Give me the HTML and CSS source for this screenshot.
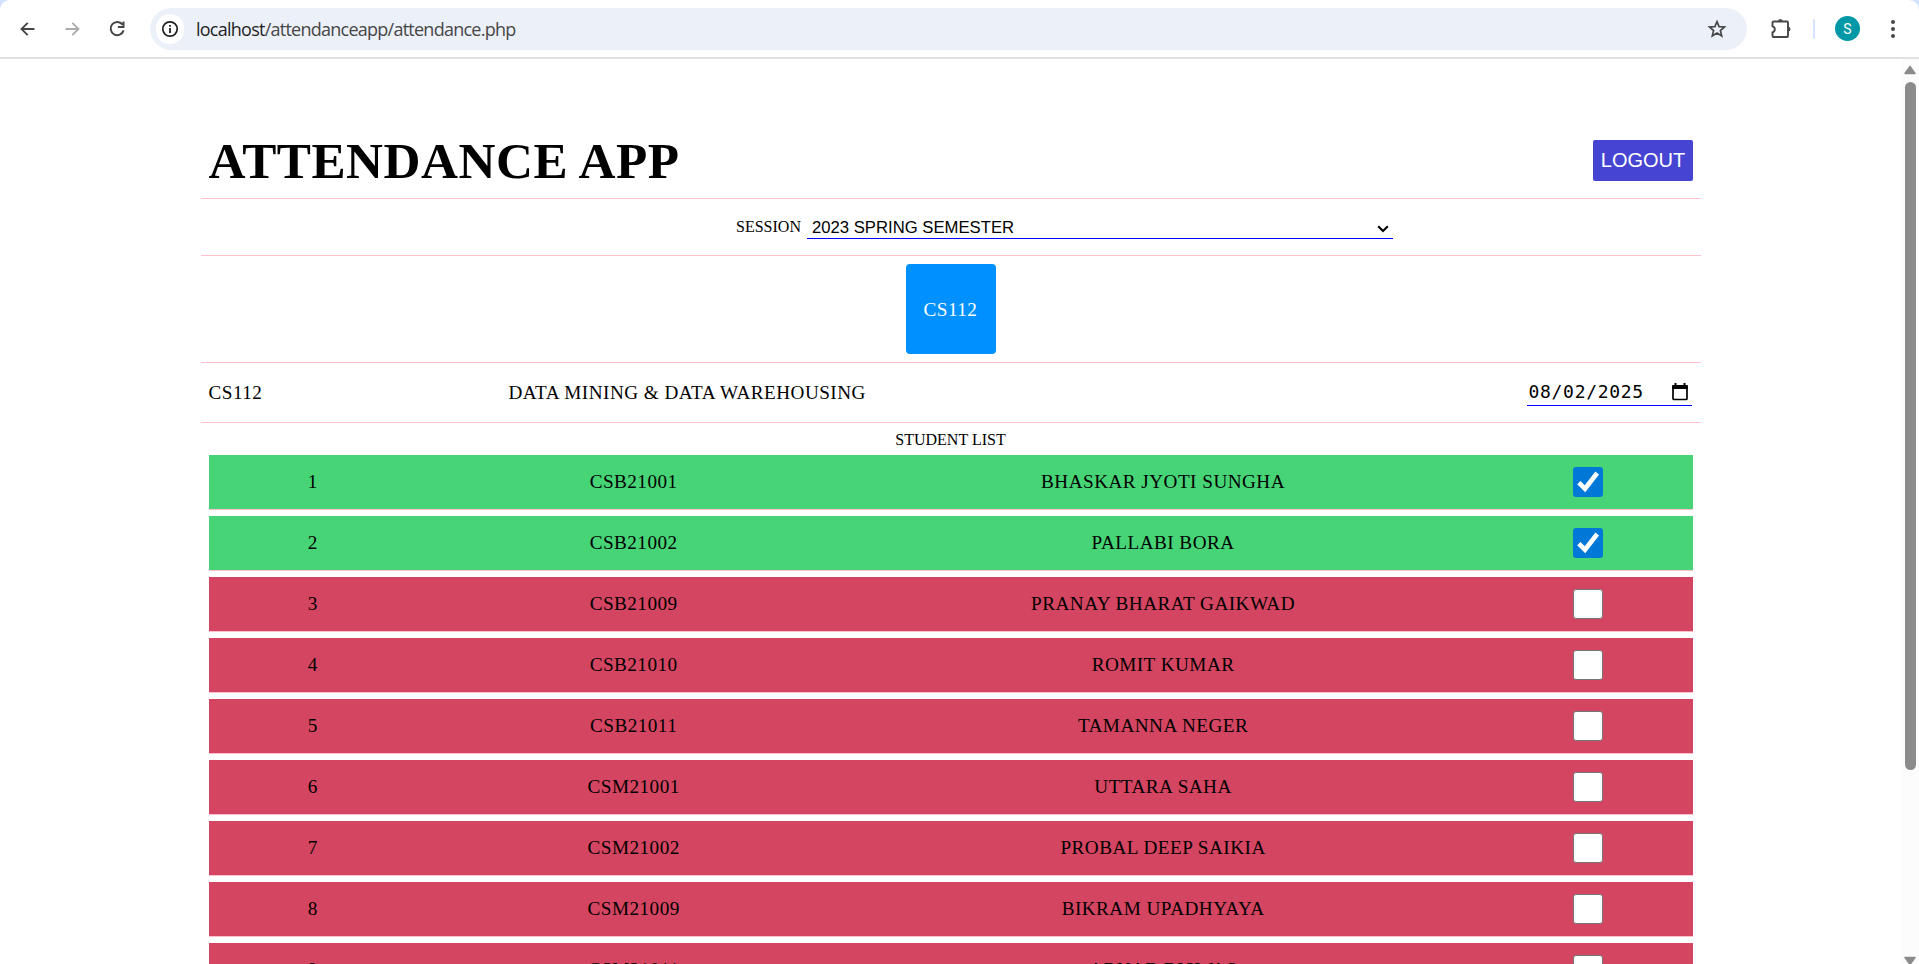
FILE: index.html
```html
<!DOCTYPE html>
<html lang="en">
<head>
<meta charset="utf-8">
<title>Attendance App</title>
<link rel="stylesheet" href="styles.css">
</head>
<body>
<div class="toolbar-wrap">
  <header class="toolbar">
    <svg class="icon back" width="20" height="20" viewBox="0 0 20 20"><path d="M16.500 10H4M9.700 3.800 3.500 10l6.200 6.200" fill="none" stroke="#474747" stroke-width="1.900"/></svg>
    <svg class="icon forward" width="20" height="20" viewBox="0 0 20 20"><path d="M3.500 10H16M10.300 3.800l6.200 6.200-6.200 6.200" fill="none" stroke="#ababab" stroke-width="1.800"/></svg>
    <svg class="icon reload" width="20" height="20" viewBox="0 0 20 20"><path d="M15.600 5.600A6.600 6.600 0 1 0 16.600 11.400M16.500 2.500v5.600h-5.600" fill="none" stroke="#474747" stroke-width="2"/></svg>
    <div class="address">
      <span class="info"><svg width="18" height="18" viewBox="0 0 18 18"><circle cx="9" cy="9" r="7.200" fill="none" stroke="#1f1f1f" stroke-width="1.700"/><path d="M9 8v5M9 5v1.800" stroke="#1f1f1f" stroke-width="1.800"/></svg></span>
      <span class="url"><b class="host">localhost</b>/attendanceapp/attendance.php</span>
      <svg class="star" width="20" height="20" viewBox="0 0 20 20"><path d="M10 2.600l2.100 5 5.400.4-4.100 3.600 1.300 5.300L10 14.100l-4.700 2.800 1.300-5.300L2.500 8l5.400-.4z" fill="none" stroke="#474747" stroke-width="1.700"/></svg>
    </div>
    <svg class="puzzle" width="22" height="22" viewBox="0 0 22 22"><path d="M2.500 4.500q0-1 1-1h13.500q1 0 1 1v13.500q0 1-1 1H3.500q-1 0-1-1V14.300a3.100 3.100 0 0 0 0-6z" fill="none" stroke="#474747" stroke-width="1.900"/><path d="M8 3.500a2.400 2.500 0 0 1 4.800 0zM18 8.800a2.500 2.400 0 0 1 0 4.800z" fill="#474747"/></svg>
    <span class="divider"></span>
    <span class="avatar">S</span>
    <svg class="dots" width="6" height="20" viewBox="0 0 6 20"><g fill="#474747"><circle cx="3" cy="3" r="2"/><circle cx="3" cy="10" r="2"/><circle cx="3" cy="17" r="2"/></g></svg>
  </header>
</div>
<div class="viewport">
  <main class="page">
    <section class="head"><h1>ATTENDANCE APP</h1><button class="logout">LOGOUT</button></section>
    <section class="session">
      <label>SESSION</label>
      <div class="select"><span>2023 SPRING SEMESTER</span><svg width="12" height="8" viewBox="0 0 12 8"><path d="M1.200 1.200 6 6l4.800-4.800" fill="none" stroke="#000" stroke-width="2.100"/></svg></div>
    </section>
    <section class="courses"><div class="card">CS112</div></section>
    <section class="detail">
      <span class="code">CS112</span><span class="name">DATA MINING &amp; DATA WAREHOUSING</span>
      <div class="date"><span>08/02/2025</span><svg width="18" height="20" viewBox="0 0 18 20"><rect x="2" y="4" width="14" height="13.500" rx="1" fill="none" stroke="#000" stroke-width="1.700"/><path d="M1.200 3h15.600v4H1.200zM3.500 1h2v3h-2zM12.500 1h2v3h-2z"/></svg></div>
    </section>
    <div class="list-title">STUDENT LIST</div>
    <div class="list">
      <div class="row present"><span>1</span><span>CSB21001</span><span>BHASKAR JYOTI SUNGHA</span><i class="box"><svg viewBox="0 0 30 30"><path d="M5.800 15.700l6.200 6L24.200 6" fill="none" stroke="#fff" stroke-width="4.600"/></svg></i></div>
      <div class="row present"><span>2</span><span>CSB21002</span><span>PALLABI BORA</span><i class="box"><svg viewBox="0 0 30 30"><path d="M5.800 15.700l6.200 6L24.200 6" fill="none" stroke="#fff" stroke-width="4.600"/></svg></i></div>
      <div class="row"><span>3</span><span>CSB21009</span><span>PRANAY BHARAT GAIKWAD</span><i class="box"></i></div>
      <div class="row"><span>4</span><span>CSB21010</span><span>ROMIT KUMAR</span><i class="box"></i></div>
      <div class="row"><span>5</span><span>CSB21011</span><span>TAMANNA NEGER</span><i class="box"></i></div>
      <div class="row"><span>6</span><span>CSM21001</span><span>UTTARA SAHA</span><i class="box"></i></div>
      <div class="row"><span>7</span><span>CSM21002</span><span>PROBAL DEEP SAIKIA</span><i class="box"></i></div>
      <div class="row"><span>8</span><span>CSM21009</span><span>BIKRAM UPADHYAYA</span><i class="box"></i></div>
      <div class="row"><span>9</span><span>CSM21011</span><span>ARNAB BISWAS</span><i class="box"></i></div>
    </div>
  </main>
  <aside class="scrollbar">
    <svg width="12" height="10" viewBox="0 0 12 10"><path d="M6 1.500 11 8.500H1z" fill="#8b8b8b" stroke="#8b8b8b" stroke-linejoin="round" stroke-width="1.500"/></svg>
    <span class="thumb"></span>
    <svg class="down" width="12" height="10" viewBox="0 0 12 10"><path d="M6 8.500 11 1.500H1z" fill="#8b8b8b" stroke="#8b8b8b" stroke-linejoin="round" stroke-width="1.500"/></svg>
  </aside>
</div>
</body>
</html>
```

FILE: styles.css
```css
* { box-sizing: border-box; }
body {
  margin: 0;
  height: 964px;
  overflow: hidden;
  display: flex;
  flex-direction: column;
  background: #fff;
  color: #000;
  font-family: "Liberation Serif", "Times New Roman", serif;
  font-size: 16px;
}
.toolbar-wrap { flex: none; background: #d3e3fd; }
.toolbar {
  display: flex;
  align-items: center;
  height: 59px;
  padding: 0 23px 0 18px;
  background: #fff;
  border-bottom: 2px solid #e0e2e0;
  border-radius: 10px 10px 0 0;
}
.toolbar svg { flex: none; }
.forward { margin-left: 24px; }
.reload { margin-left: 25px; }
.address {
  display: flex;
  align-items: center;
  width: 1597px;
  height: 42px;
  margin-left: 23px;
  padding: 0 20px 0 6px;
  border-radius: 21px;
  background: #ecf0f9;
}
.info {
  display: grid;
  place-items: center;
  width: 28px;
  height: 30px;
  border-radius: 15px;
  background: #fff;
}
.url {
  margin-left: 12px;
  font: 18px "Open Sans", "Noto Sans", sans-serif;
  letter-spacing: -0.75px;
  color: #474747;
}
.host { font-weight: 400; color: #1f1f1f; }
.star { margin-left: auto; }
.puzzle { margin-left: 23px; }
.divider { width: 2px; height: 20px; margin-left: 21px; border-radius: 1px; background: #d3e3fd; }
.avatar {
  display: grid;
  place-items: center;
  width: 25px;
  height: 25px;
  margin: 0 30px 0 20px;
  border-radius: 50%;
  background: #0097a7;
  color: #fff;
  font: 14px Roboto, sans-serif;
}
.viewport { flex: 1; min-height: 0; display: flex; }
.page { width: 1500px; margin: 0 auto; }
.head, .session, .courses, .detail { border-bottom: 1px solid pink; padding: 0 8px; display: flex; }
.head { height: 140px; padding-top: 64px; justify-content: space-between; align-items: center; }
h1 { margin: 0; font-size: 51.2px; line-height: 60px; letter-spacing: 0.5px; }
.logout {
  width: 100px;
  height: 41px;
  margin-bottom: 13px;
  margin-top: 12px;
  padding: 0 0 0 1px;
  border: 0;
  border-radius: 2px;
  background: #4544d3;
  color: #fff;
  font: 20px "Liberation Sans", Arial, sans-serif;
}
.session { height: 57px; justify-content: center; }
.session label { margin: 19px 6px 0 228px; line-height: 18px; }
.select {
  display: flex;
  align-items: center;
  justify-content: space-between;
  width: 586px;
  height: 24px;
  margin-top: 16px;
  padding: 2px 4px 0 5px;
  border-bottom: 1px solid #00f;
  font: 16.700px "Liberation Sans", Arial, sans-serif;
}
.select svg { margin-top: 2px; }
.courses { height: 107px; align-items: center; justify-content: center; }
.card {
  display: grid;
  place-items: center;
  width: 90px;
  height: 90px;
  padding-top: 2px;
  border-radius: 4px;
  background: #0090ff;
  color: #fff;
  font-size: 19.2px;
  letter-spacing: 0.45px;
}
.detail { height: 60px; align-items: center; font-size: 19.2px; letter-spacing: 0.48px; }
.code { width: 300px; }
.date {
  display: flex;
  align-items: center;
  justify-content: space-between;
  width: 165px;
  height: 27px;
  margin: 0 1px 0 auto;
  padding: 0 3px 1px 2px;
  border-bottom: 1px solid #00f;
  font: 18px "DejaVu Sans Mono", monospace;
  letter-spacing: 0.7px;
}
.list-title { height: 32px; padding-top: 8px; line-height: 18px; text-align: center; }
.list { display: grid; gap: 6px; padding: 0 8px; }
.row {
  display: grid;
  grid-template-columns: 1fr 2fr 3fr 1fr;
  column-gap: 8px;
  place-items: center;
  height: 55px;
  border-bottom: 1px solid pink;
  background: #d44561;
  background-clip: padding-box;
  font-size: 19.2px;
  letter-spacing: 0.47px;
}
.row.present { background-color: #46d476; }
.box {
  width: 30px;
  height: 30px;
  border: 1px solid #767676;
  border-radius: 3px;
  background: #fff;
}
.present .box { border: 0; background: #0078d7; }
.box svg { display: block; }
.scrollbar {
  display: flex;
  flex-direction: column;
  align-items: center;
  width: 18px;
  padding-top: 6px;
  background: #fcfcfc;
}
.thumb { width: 11px; height: 688px; margin-top: 7px; border-radius: 6px; background: #8b8b8b; }
.down { margin-top: auto; margin-bottom: -2px; }
```
